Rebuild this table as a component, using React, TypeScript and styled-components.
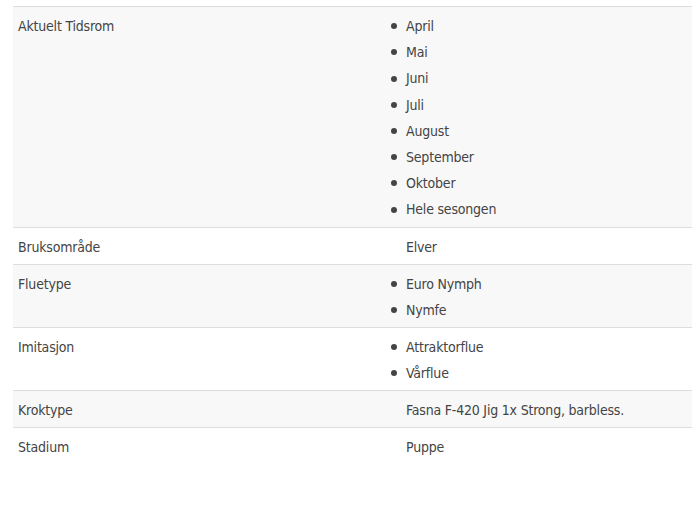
import React from "react";
import styled, { createGlobalStyle } from "styled-components";

const Global = createGlobalStyle`
  html, body { margin: 0; padding: 0; background: #ffffff; }
  body { font-family: "DejaVu Sans Condensed", "DejaVu Sans", sans-serif; font-stretch: condensed; }
`;

const Page = styled.div`
  padding: 6px 0 0 13px;
  overflow: hidden;
`;

const Table = styled.div`
  display: grid;
  grid-template-columns: 375px 1fr;
  width: 800px;
  border-top: 1px solid #dedede;
`;

const Row = styled.div<{ $alt: boolean; $last: boolean }>`
  display: contents;
  & > div {
    background: ${(p) => (p.$alt ? "#f8f8f8" : "#ffffff")};
    border-bottom: ${(p) => (p.$last ? "none" : "1px solid #dedede")};
  }
`;

const Cell = styled.div`
  padding: 6px 5px 4px 5px;
  font-size: 14px;
  letter-spacing: -0.2px;
  line-height: 26px;
  color: #444444;
`;

const Label = styled(Cell)``;

const Value = styled(Cell)`
  padding-left: 18px;
`;

const List = styled.ul`
  margin: 0;
  padding: 0;
  list-style: none;
`;

const Item = styled.li`
  display: flex;
  align-items: center;
  line-height: 26.2px;
  &::before {
    content: "";
    flex: none;
    width: 6px;
    height: 6px;
    border-radius: 50%;
    background: #444444;
    margin-left: -15px;
    margin-right: 9px;
  }
`;

type Entry = { label: string; values: string[]; list: boolean };

const data: Entry[] = [
  {
    label: "Aktuelt Tidsrom",
    values: ["April", "Mai", "Juni", "Juli", "August", "September", "Oktober", "Hele sesongen"],
    list: true,
  },
  { label: "Bruksområde", values: ["Elver"], list: false },
  { label: "Fluetype", values: ["Euro Nymph", "Nymfe"], list: true },
  { label: "Imitasjon", values: ["Attraktorflue", "Vårflue"], list: true },
  { label: "Kroktype", values: ["Fasna F-420 Jig 1x Strong, barbless."], list: false },
  { label: "Stadium", values: ["Puppe"], list: false },
];

export default function App() {
  return (
    <>
      <Global />
      <Page>
        <Table>
          {data.map((e, i) => (
            <Row key={e.label} $alt={i % 2 === 0} $last={i === data.length - 1}>
              <Label>{e.label}</Label>
              <Value>
                {e.list ? (
                  <List>
                    {e.values.map((v) => (
                      <Item key={v}>{v}</Item>
                    ))}
                  </List>
                ) : (
                  e.values[0]
                )}
              </Value>
            </Row>
          ))}
        </Table>
      </Page>
    </>
  );
}
